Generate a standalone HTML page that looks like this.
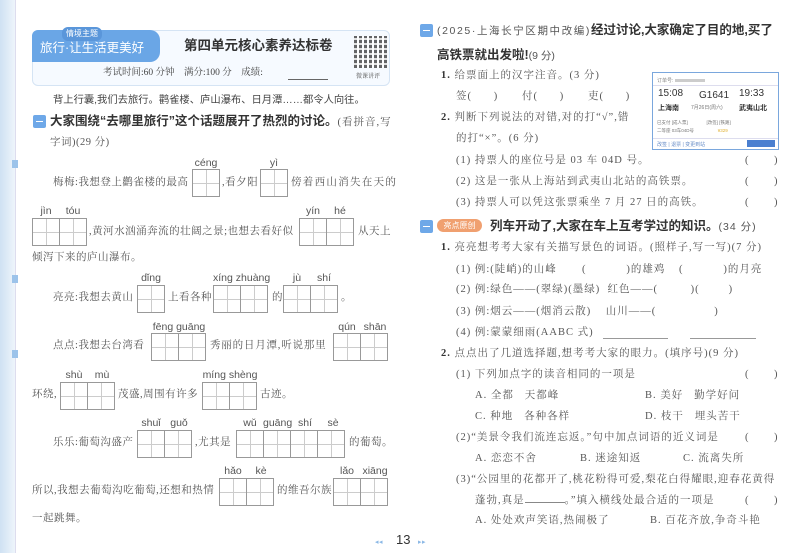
<!DOCTYPE html>
<html><head><meta charset="utf-8">
<style>
*{margin:0;padding:0;box-sizing:border-box}
body{width:800px;height:553px;background:#fff;position:relative;overflow:hidden;font-family:"Liberation Serif","Noto Serif CJK SC",serif;color:#555}
.t{position:absolute;white-space:nowrap;font-size:10.5px;line-height:14px;letter-spacing:0.5px}
.r{letter-spacing:1px}
.h{font-family:"Liberation Sans","Noto Sans CJK SC",sans-serif;font-weight:bold;color:#333;font-size:12.5px;letter-spacing:0}
.py{position:absolute;font-family:"Liberation Sans","DejaVu Sans",sans-serif;font-size:10.5px;color:#555;text-align:center;white-space:nowrap}
.bx{position:absolute;display:flex;height:28px}
.bx i{display:block;width:28px;height:28px;border:1px solid #999;margin-left:-1px;
background:linear-gradient(to right,transparent 13px,#ccc 13px,#ccc 14px,transparent 14px),linear-gradient(to bottom,transparent 13px,#ccc 13px,#ccc 14px,transparent 14px)}
.bx i:first-child{margin-left:0}
.badge{position:absolute;width:13px;height:13px;background:#6ea8e8;border-radius:2px}
.badge:after{content:"";position:absolute;left:3px;right:3px;top:6px;height:1px;background:#fff}
</style></head><body>
<div style="position:absolute;left:0;top:0;width:15px;height:553px;background:linear-gradient(to right,#cfe1f3,#eef5fb)"></div>
<div style="position:absolute;left:15px;top:0;width:1px;height:553px;background:#dde"></div>
<div style="position:absolute;left:12px;top:160px;width:6px;height:8px;background:#9cc3ea"></div>
<div style="position:absolute;left:12px;top:275px;width:6px;height:8px;background:#9cc3ea"></div>
<div style="position:absolute;left:12px;top:350px;width:6px;height:8px;background:#9cc3ea"></div>

<div style="position:absolute;left:32px;top:30px;width:358px;height:56px;border:1px solid #d5e4f4;border-radius:6px;background:#f6faff"></div>
<div style="position:absolute;left:32px;top:30px;width:128px;height:32px;background:#6aa6e6;border-radius:6px 10px 10px 0"></div>
<div class="t" style="left:62px;top:27px;font-size:8px;color:#fff;background:#5a96da;border-radius:6px;padding:0 4px;letter-spacing:0;font-family:'Liberation Sans','Noto Sans CJK SC',sans-serif">情境主题</div>
<div class="t" style="left:40px;top:41px;font-size:12.5px;color:#fff;letter-spacing:0;font-family:'Liberation Sans','Noto Sans CJK SC',sans-serif">旅行·让生活更美好</div>
<div class="t h" style="left:184px;top:39px;font-size:13.5px">第四单元核心素养达标卷</div>
<div style="position:absolute;left:354px;top:36px;width:33px;height:32px;background:repeating-linear-gradient(90deg,#333 0 3px,#fff 3px 5px),#333;opacity:.75"></div>
<div style="position:absolute;left:354px;top:36px;width:33px;height:32px;background:repeating-linear-gradient(0deg,transparent 0 3px,rgba(255,255,255,.8) 3px 5px)"></div>
<div class="t" style="left:356px;top:70px;font-size:6px;letter-spacing:0">微课讲评</div>
<div class="t" style="left:103px;top:66px;font-size:9.5px;color:#444;letter-spacing:0">考试时间:60 分钟&nbsp;&nbsp;&nbsp; 满分:100 分&nbsp;&nbsp;&nbsp; 成绩:</div>
<div style="position:absolute;left:288px;top:79px;width:40px;height:1px;background:#666"></div>

<div class="t" style="left:53px;top:94px;font-size:10.3px;letter-spacing:0;font-family:'Liberation Sans','Noto Sans CJK SC',sans-serif;color:#444">背上行囊,我们去旅行。鹳雀楼、庐山瀑布、日月潭……都令人向往。</div>
<div class="badge" style="left:33px;top:115px"></div>
<div class="t h" style="left:50px;top:114px">大家围绕“去哪里旅行”这个话题展开了热烈的讨论。<span style="font-weight:normal;font-size:10.5px;color:#555;letter-spacing:1px;font-family:'Liberation Serif','Noto Serif CJK SC',serif">(看拼音,写</span></div>
<div class="t" style="left:50px;top:136px">字词)(29 分)</div>

<div class="py" style="left:192px;top:157px;width:28px">céng</div>
<div class="py" style="left:260px;top:157px;width:28px">yì</div>
<div class="t" style="left:53px;top:176px">梅梅:我想登上鹳雀楼的最高</div>
<div class="bx" style="left:192px;top:169px"><i></i></div>
<div class="t" style="left:222px;top:176px">,看夕阳</div>
<div class="bx" style="left:260px;top:169px"><i></i></div>
<div class="t" style="left:291px;top:176px;letter-spacing:1.3px">傍着西山消失在天的</div>

<div class="py" style="left:32px;top:205px;width:28px">jìn</div>
<div class="py" style="left:59px;top:205px;width:28px">tóu</div>
<div class="py" style="left:299px;top:205px;width:28px">yín</div>
<div class="py" style="left:326px;top:205px;width:28px">hé</div>
<div class="bx" style="left:32px;top:218px"><i></i><i></i></div>
<div class="t" style="left:89px;top:225px">,黄河水汹涌奔流的壮阔之景;也想去看好似</div>
<div class="bx" style="left:299px;top:218px"><i></i><i></i></div>
<div class="t" style="left:358px;top:225px">从天上</div>
<div class="t" style="left:32px;top:251px">倾泻下来的庐山瀑布。</div>

<div class="py" style="left:137px;top:272px;width:28px">dǐng</div>
<div class="py" style="left:213px;top:272px;width:56px">xíng zhuàng</div>
<div class="py" style="left:283px;top:272px;width:28px">jù</div>
<div class="py" style="left:310px;top:272px;width:28px">shí</div>
<div class="t" style="left:53px;top:291px">亮亮:我想去黄山</div>
<div class="bx" style="left:137px;top:285px"><i></i></div>
<div class="t" style="left:168px;top:291px">上看各种</div>
<div class="bx" style="left:213px;top:285px"><i></i><i></i></div>
<div class="t" style="left:272px;top:291px">的</div>
<div class="bx" style="left:283px;top:285px"><i></i><i></i></div>
<div class="t" style="left:341px;top:291px">。</div>

<div class="py" style="left:151px;top:321px;width:56px">fēng guāng</div>
<div class="py" style="left:333px;top:321px;width:28px">qún</div>
<div class="py" style="left:361px;top:321px;width:28px">shān</div>
<div class="t" style="left:53px;top:339px">点点:我想去台湾看</div>
<div class="bx" style="left:151px;top:333px"><i></i><i></i></div>
<div class="t" style="left:210px;top:339px;letter-spacing:0.8px">秀丽的日月潭,听说那里</div>
<div class="bx" style="left:333px;top:333px"><i></i><i></i></div>

<div class="py" style="left:60px;top:369px;width:28px">shù</div>
<div class="py" style="left:88px;top:369px;width:28px">mù</div>
<div class="py" style="left:202px;top:369px;width:56px">míng shèng</div>
<div class="t" style="left:32px;top:388px">环绕,</div>
<div class="bx" style="left:60px;top:382px"><i></i><i></i></div>
<div class="t" style="left:118px;top:388px">茂盛,周围有许多</div>
<div class="bx" style="left:202px;top:382px"><i></i><i></i></div>
<div class="t" style="left:260px;top:388px">古迹。</div>

<div class="py" style="left:137px;top:417px;width:28px">shuǐ</div>
<div class="py" style="left:165px;top:417px;width:28px">guǒ</div>
<div class="py" style="left:236px;top:417px;width:28px">wǔ</div>
<div class="py" style="left:263px;top:417px;width:28px">guāng</div>
<div class="py" style="left:291px;top:417px;width:28px">shí</div>
<div class="py" style="left:319px;top:417px;width:28px">sè</div>
<div class="t" style="left:53px;top:436px">乐乐:葡萄沟盛产</div>
<div class="bx" style="left:137px;top:430px"><i></i><i></i></div>
<div class="t" style="left:195px;top:436px">,尤其是</div>
<div class="bx" style="left:236px;top:430px"><i></i><i></i><i></i><i></i></div>
<div class="t" style="left:349px;top:436px">的葡萄。</div>

<div class="py" style="left:219px;top:465px;width:28px">hǎo</div>
<div class="py" style="left:247px;top:465px;width:28px">kè</div>
<div class="py" style="left:333px;top:465px;width:28px">lǎo</div>
<div class="py" style="left:361px;top:465px;width:28px">xiāng</div>
<div class="t" style="left:32px;top:484px">所以,我想去葡萄沟吃葡萄,还想和热情</div>
<div class="bx" style="left:219px;top:478px"><i></i><i></i></div>
<div class="t" style="left:277px;top:484px">的维吾尔族</div>
<div class="bx" style="left:333px;top:478px"><i></i><i></i></div>
<div class="t" style="left:32px;top:512px">一起跳舞。</div>

<div class="t" style="left:375px;top:535px;font-size:7px;color:#8bb8e6">◂◂</div>
<div class="t" style="left:396px;top:533px;font-size:13px;color:#333;letter-spacing:0;font-family:'Liberation Sans',sans-serif">13</div>
<div class="t" style="left:418px;top:535px;font-size:7px;color:#8bb8e6">▸▸</div>

<div class="badge" style="left:420px;top:24px"></div>
<div class="t h" style="left:437px;top:23px"><span style="font-weight:normal;font-size:10.5px;color:#555;letter-spacing:1.6px">(2025·上海长宁区期中改编)</span>经过讨论,大家确定了目的地,买了</div>
<div class="t h" style="left:437px;top:48px">高铁票就出发啦!<span style="font-weight:normal;font-size:10.5px;color:#555">(9 分)</span></div>
<div class="t r" style="left:441px;top:69px"><b style="color:#333">1.</b> 给票面上的汉字注音。(3 分)</div>
<div class="t r" style="left:456px;top:90px">签(&nbsp;&nbsp;&nbsp;&nbsp;&nbsp;&nbsp;)</div>
<div class="t r" style="left:522px;top:90px">付(&nbsp;&nbsp;&nbsp;&nbsp;&nbsp;&nbsp;)</div>
<div class="t r" style="left:588px;top:90px">吏(&nbsp;&nbsp;&nbsp;&nbsp;&nbsp;&nbsp;)</div>
<div class="t r" style="left:441px;top:111px"><b style="color:#333">2.</b> 判断下列说法的对错,对的打“√”,错</div>
<div class="t r" style="left:456px;top:132px">的打“×”。(6 分)</div>
<div class="t r" style="left:456px;top:154px">(1) 持票人的座位号是 03 车 04D 号。</div>
<div class="t r" style="left:456px;top:175px">(2) 这是一张从上海站到武夷山北站的高铁票。</div>
<div class="t r" style="left:456px;top:196px">(3) 持票人可以凭这张票乘坐 7 月 27 日的高铁。</div>
<div class="t" style="left:745px;top:154px">(&nbsp;&nbsp;&nbsp;&nbsp;&nbsp;&nbsp;&nbsp;&nbsp;)</div>
<div class="t" style="left:745px;top:175px">(&nbsp;&nbsp;&nbsp;&nbsp;&nbsp;&nbsp;&nbsp;&nbsp;)</div>
<div class="t" style="left:745px;top:196px">(&nbsp;&nbsp;&nbsp;&nbsp;&nbsp;&nbsp;&nbsp;&nbsp;)</div>

<div style="position:absolute;left:652px;top:72px;width:127px;height:78px;border:1.5px solid #7aa7dd;background:#fff;font-family:'Liberation Sans','Noto Sans CJK SC',sans-serif;color:#333">
 <div style="position:absolute;left:4px;top:4px;font-size:5px;color:#888">订单号: <span style="display:inline-block;width:30px;height:3px;background:#ccc"></span></div>
 <div style="position:absolute;left:0;right:0;top:12px;height:1px;background:#dde"></div>
 <div style="position:absolute;left:5px;top:15px;font-size:10px">15:08</div>
 <div style="position:absolute;left:46px;top:17px;font-size:10px">G1641</div>
 <div style="position:absolute;left:86px;top:15px;font-size:10px">19:33</div>
 <div style="position:absolute;left:5px;top:30px;font-size:7px;font-weight:bold">上海南</div>
 <div style="position:absolute;left:38px;top:31px;font-size:5px;color:#777">7月26日(周六)</div>
 <div style="position:absolute;left:86px;top:30px;font-size:7px;font-weight:bold">武夷山北</div>
 <div style="position:absolute;left:4px;top:47px;font-size:4.5px;color:#777">已支付 [成人票]&nbsp;&nbsp;&nbsp;&nbsp;&nbsp;&nbsp;&nbsp;&nbsp;&nbsp;&nbsp;&nbsp;&nbsp;&nbsp;&nbsp; [改签] [铁路]</div>
 <div style="position:absolute;left:4px;top:55px;font-size:4.5px;color:#777">二等座 03车04D号&nbsp;&nbsp;&nbsp;&nbsp;&nbsp;&nbsp;&nbsp;&nbsp;&nbsp;&nbsp;&nbsp;&nbsp;&nbsp;&nbsp;&nbsp;&nbsp;&nbsp;&nbsp; <span style="color:#e0b030">¥329</span></div>
 <div style="position:absolute;left:0;right:0;top:65px;height:1px;background:#dde"></div>
 <div style="position:absolute;left:4px;top:68px;font-size:5px;color:#6a8fc8">改签 | 退票 | 变更到站</div>
 <div style="position:absolute;right:3px;top:67px;width:28px;height:7px;background:#4a7fd0"></div>
</div>

<div class="badge" style="left:420px;top:220px"></div>
<div style="position:absolute;left:437px;top:219px;width:45px;height:13px;background:#f0a070;border-radius:7px;font-size:8px;color:#fff;text-align:center;line-height:13px;font-family:'Liberation Sans','Noto Sans CJK SC',sans-serif">亮点原创</div>
<div class="t h" style="left:490px;top:219px">列车开动了,大家在车上互考学过的知识。<span style="font-weight:normal;font-size:10.5px;color:#555;letter-spacing:1px">(34 分)</span></div>
<div class="t r" style="left:441px;top:241px"><b style="color:#333">1.</b> 亮亮想考考大家有关描写景色的词语。(照样子,写一写)(7 分)</div>
<div class="t r" style="left:456px;top:263px">(1) 例:(陡峭)的山峰</div>
<div class="t r" style="left:582px;top:263px">(&nbsp;&nbsp;&nbsp;&nbsp;&nbsp;&nbsp;&nbsp;&nbsp;&nbsp;&nbsp; )的雄鸡</div>
<div class="t r" style="left:679px;top:263px">(&nbsp;&nbsp;&nbsp;&nbsp;&nbsp;&nbsp;&nbsp;&nbsp;&nbsp;&nbsp; )的月亮</div>
<div class="t r" style="left:456px;top:283px">(2) 例:绿色——(翠绿)(墨绿)&nbsp; 红色——(&nbsp;&nbsp;&nbsp;&nbsp;&nbsp;&nbsp;&nbsp;&nbsp; )(&nbsp;&nbsp;&nbsp;&nbsp;&nbsp;&nbsp;&nbsp; )</div>
<div class="t r" style="left:456px;top:305px">(3) 例:烟云——(烟消云散)&nbsp;&nbsp;&nbsp; 山川——(&nbsp;&nbsp;&nbsp;&nbsp;&nbsp;&nbsp;&nbsp;&nbsp;&nbsp;&nbsp;&nbsp;&nbsp;&nbsp;&nbsp;&nbsp; )</div>
<div class="t r" style="left:456px;top:326px">(4) 例:蒙蒙细雨(AABC 式)</div>
<div style="position:absolute;left:603px;top:338px;width:65px;height:1px;background:#999"></div>
<div style="position:absolute;left:690px;top:338px;width:66px;height:1px;background:#999"></div>
<div class="t r" style="left:441px;top:347px"><b style="color:#333">2.</b> 点点出了几道选择题,想考考大家的眼力。(填序号)(9 分)</div>
<div class="t r" style="left:456px;top:368px">(1) 下列加点字的读音相同的一项是</div>
<div class="t r" style="left:475px;top:389px">A. 全都&nbsp;&nbsp; 天都峰</div>
<div class="t r" style="left:645px;top:389px">B. 美好&nbsp;&nbsp; 勤学好问</div>
<div class="t r" style="left:475px;top:410px">C. 种地&nbsp;&nbsp; 各种各样</div>
<div class="t r" style="left:645px;top:410px">D. 枝干&nbsp;&nbsp; 埋头苦干</div>
<div class="t r" style="left:456px;top:431px">(2)“美景令我们流连忘返。”句中加点词语的近义词是</div>
<div class="t r" style="left:475px;top:452px">A. 恋恋不舍</div>
<div class="t r" style="left:580px;top:452px">B. 迷途知返</div>
<div class="t r" style="left:683px;top:452px">C. 流离失所</div>
<div class="t r" style="left:456px;top:473px">(3)“公园里的花都开了,桃花粉得可爱,梨花白得耀眼,迎春花黄得</div>
<div class="t r" style="left:475px;top:494px">蓬勃,真是<span style="display:inline-block;width:40px;border-bottom:1px solid #888"></span>。”填入横线处最合适的一项是</div>
<div class="t r" style="left:475px;top:514px">A. 处处欢声笑语,热闹极了</div>
<div class="t r" style="left:650px;top:514px">B. 百花齐放,争奇斗艳</div>
<div class="t" style="left:745px;top:368px">(&nbsp;&nbsp;&nbsp;&nbsp;&nbsp;&nbsp;&nbsp;&nbsp;)</div>
<div class="t" style="left:745px;top:431px">(&nbsp;&nbsp;&nbsp;&nbsp;&nbsp;&nbsp;&nbsp;&nbsp;)</div>
<div class="t" style="left:745px;top:494px">(&nbsp;&nbsp;&nbsp;&nbsp;&nbsp;&nbsp;&nbsp;&nbsp;)</div>
</body></html>
